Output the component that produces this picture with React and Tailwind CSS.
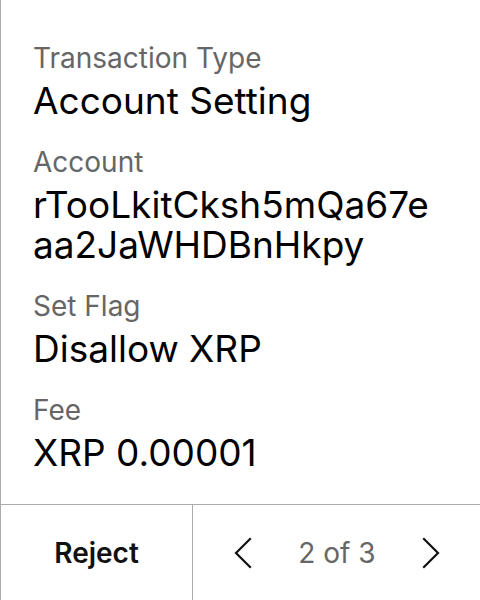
import React from 'react';

const rows = [
  { label: 'Transaction Type', value: 'Account Setting' },
  { label: 'Account', value: 'rTooLkitCksh5mQa67eaa2JaWHDBnHkpy' },
  { label: 'Set Flag', value: 'Disallow XRP' },
  { label: 'Fee', value: 'XRP 0.00001' },
];

const Chevron = ({ dir }) => (
  <svg width="18" height="32" viewBox="0 0 18 32" fill="none" stroke="#111" strokeWidth="2.2" strokeLinecap="square">
    {dir === 'left' ? <polyline points="16,2 2,16 16,30" /> : <polyline points="2,2 16,16 2,30" />}
  </svg>
);

export default function App() {
  return (
    <div
      className="w-[480px] h-[600px] flex flex-col bg-white border-l border-[#ababab]"
      style={{ fontFamily: 'Inter, "Noto Sans", sans-serif' }}
    >
      {/* Details */}
      <div className="flex-1 flex flex-col gap-[25px] pl-8 pt-[42px]">
        {rows.map((row) => (
          <div key={row.label} className="flex flex-col gap-[7px]">
            <div className="text-[28px] leading-[32px] text-[#666666]">{row.label}</div>
            <div className="w-[408px] break-all text-[37px] leading-[40px] text-black">{row.value}</div>
          </div>
        ))}
      </div>

      {/* Footer */}
      <div className="h-[96px] flex border-t border-[#ababab]">
        <button className="w-[191px] flex items-center justify-center text-[28px] font-semibold text-[#111]">
          Reject
        </button>
        <div className="flex-1 flex items-center justify-between border-l border-[#ababab] pl-[41px] pr-[40px]">
          <Chevron dir="left" />
          <span className="text-[28px] text-[#666666]">2 of 3</span>
          <Chevron dir="right" />
        </div>
      </div>
    </div>
  );
}
